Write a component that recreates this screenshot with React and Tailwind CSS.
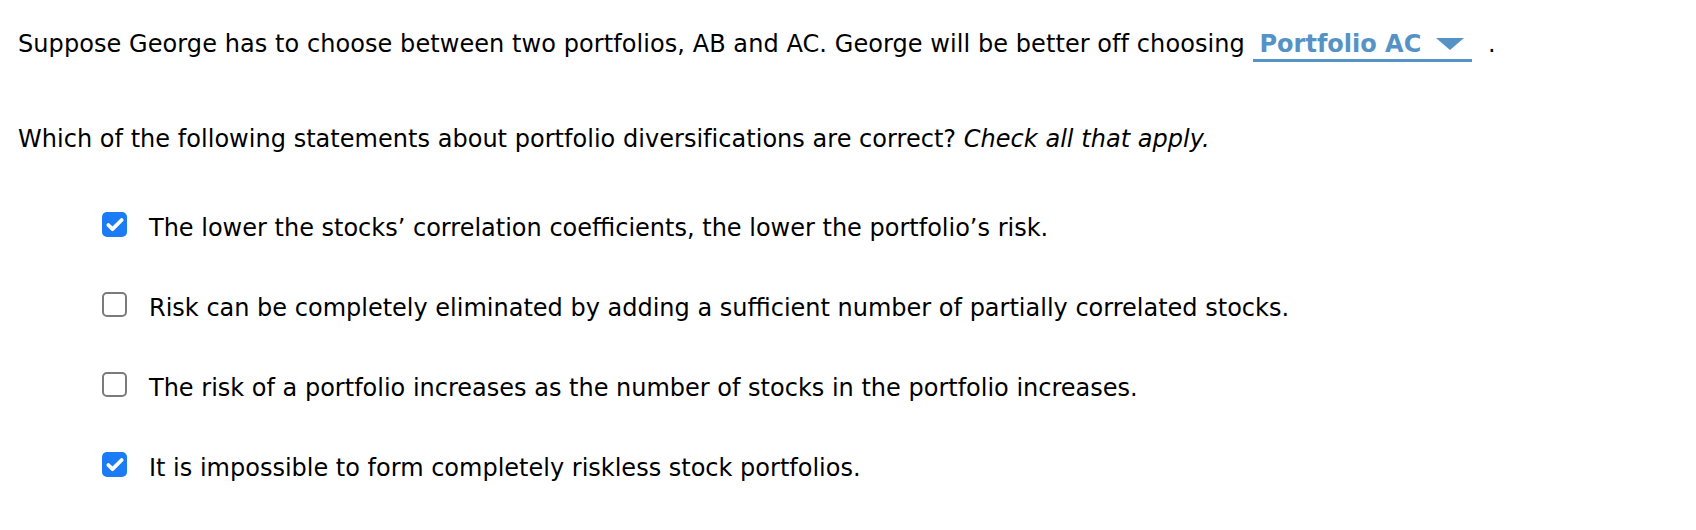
import { Check } from 'lucide-react'

const options = [
  { text: 'The lower the stocks\u2019 correlation coefficients, the lower the portfolio\u2019s risk.', checked: true },
  { text: 'Risk can be completely eliminated by adding a sufficient number of partially correlated stocks.', checked: false },
  { text: 'The risk of a portfolio increases as the number of stocks in the portfolio increases.', checked: false },
  { text: 'It is impossible to form completely riskless stock portfolios.', checked: true },
]

function Box({ checked }) {
  if (checked) {
    return (
      <span className="flex h-[25px] w-[25px] shrink-0 items-center justify-center rounded-[5px] bg-[#1b7cf5]">
        <Check className="h-[20px] w-[20px] text-white" strokeWidth={4.5} />
      </span>
    )
  }
  return <span className="h-[25px] w-[25px] shrink-0 rounded-[5px] border-2 border-[#7b7b7b] bg-white" />
}

export default function App() {
  return (
    <div className="min-h-[530px] bg-white pt-[28px] pl-[18px] text-[24px] leading-[32px] text-black" style={{ fontFamily: '"DejaVu Sans", Verdana, sans-serif' }}>
      <p className="tracking-[0.07px]">
        Suppose George has to choose between two portfolios, AB and AC. George will be better off choosing{' '}
        <span className="inline-flex translate-y-[2px] items-center border-b-[3px] border-[#5593c6] pl-[7px] pr-[8px] leading-[26px] tracking-normal">
          <span className="-translate-y-[2px] font-bold text-[#5593c6]">Portfolio AC</span>
          <svg className="ml-[15px] h-[12px] w-[28px] -translate-y-[2px]" viewBox="0 0 28 12">
            <path d="M0 0 L28 0 L14 12 Z" fill="#5593c6" />
          </svg>
        </span>{' '}
        <span className="ml-[8px]">.</span>
      </p>

      <p className="mt-[63px] tracking-[0.03px]">
        Which of the following statements about portfolio diversifications are correct? <em>Check all that apply.</em>
      </p>

      <div className="mt-[57px] flex flex-col gap-[48px] pl-[84px]">
        {options.map((o) => (
          <label key={o.text} className="flex items-start gap-[22px]">
            <Box checked={o.checked} />
            <span>{o.text}</span>
          </label>
        ))}
      </div>
    </div>
  )
}
